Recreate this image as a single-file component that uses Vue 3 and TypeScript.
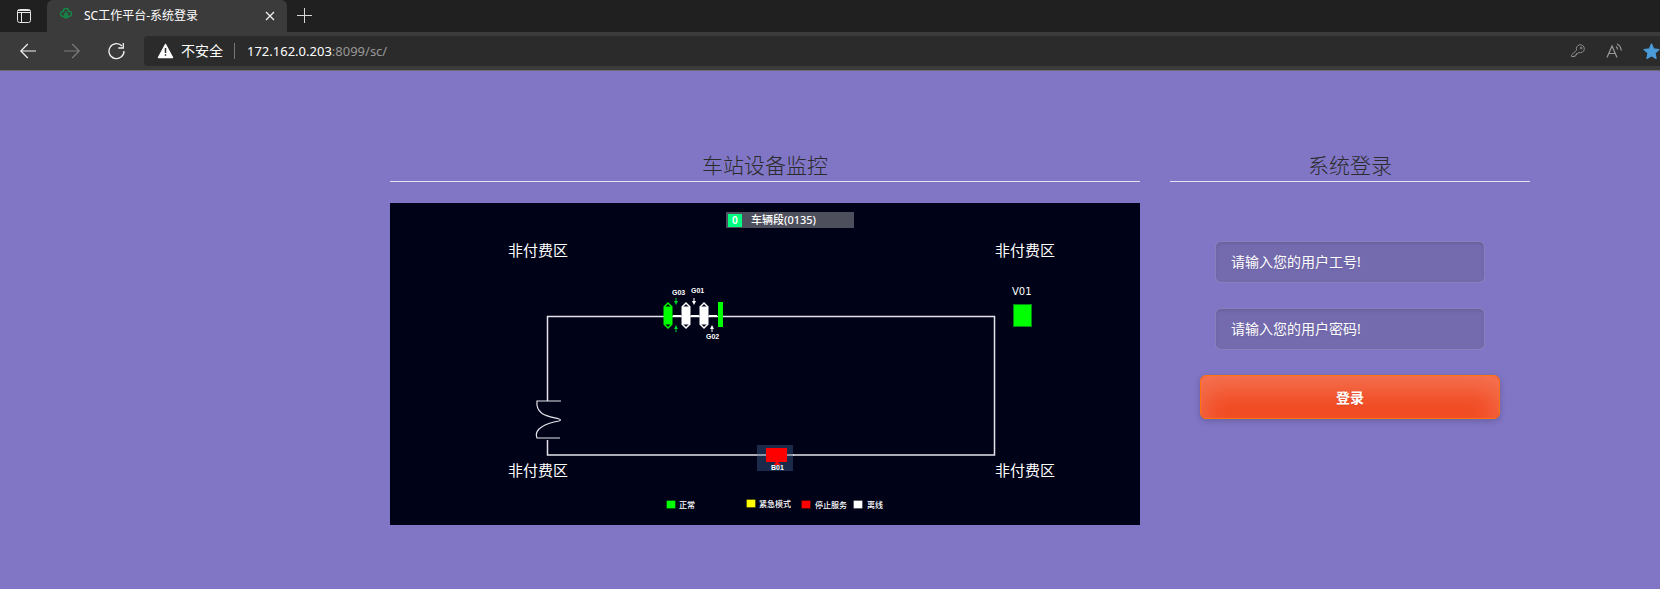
<script setup lang="ts">
import { ref } from 'vue'

interface Label { x: number; y: number; text: string }
interface Legend { x: number; y: number; color: string; text: string; tx: number }

const userId = ref('')
const password = ref('')

const zones: Label[] = [
  { x: 118, y: 53, text: '非付费区' },
  { x: 605, y: 53, text: '非付费区' },
  { x: 118, y: 273, text: '非付费区' },
  { x: 605, y: 273, text: '非付费区' },
]

const deviceLabels: Label[] = [
  { x: 282, y: 92, text: 'G03' },
  { x: 301, y: 90, text: 'G01' },
  { x: 316, y: 136, text: 'G02' },
  { x: 381, y: 267, text: 'B01' },
]

const gates = [
  { x: 274, color: '#00ff00' },
  { x: 292, color: '#ffffff' },
  { x: 310, color: '#ffffff' },
]

const arrows = [
  { x: 286, y: 95, up: false, color: '#00d030' },
  { x: 304, y: 95, up: false, color: '#ffffff' },
  { x: 286, y: 122, up: true, color: '#00d030' },
  { x: 322, y: 122, up: true, color: '#ffffff' },
]

const legends: Legend[] = [
  { x: 276, y: 297, color: '#00ff00', text: '正常', tx: 289 },
  { x: 356, y: 296, color: '#ffff00', text: '紧急模式', tx: 369 },
  { x: 411, y: 297, color: '#ff0000', text: '停止服务', tx: 425 },
  { x: 463, y: 297, color: '#ffffff', text: '离线', tx: 477 },
]
</script>

<template>
  <div class="window">
    <header class="tabs">
      <button class="icon-btn tab-menu" type="button" aria-label="标签操作">
        <svg width="16" height="16" viewBox="0 0 16 16" fill="none" stroke="#e8e8e8">
          <rect x="1.5" y="1.5" width="13" height="13" rx="2" />
          <path d="M2 2.5h12M2 4.5h12M5.5 5v9" />
        </svg>
      </button>
      <div class="tab">
        <svg class="favicon" width="14" height="14" viewBox="0 0 14 14" fill="none" stroke="#128a48" stroke-width="1.4">
          <path d="M5 5C3.500 3 5 1.500 7 1.500s3.500 1.500 2 3.500M4.500 4.500C2.500 4 1.500 5.500 1.500 7c0 2.500 3 3 4.500 1.500M9.500 4.500c2-.5 3 1 3 2.500 0 2.500-3 3-4.500 1.500M7 4.500v6M4.500 10.500h5M5 6.500L7 8l2-1.500" />
        </svg>
        <span class="tab-title">SC工作平台-系统登录</span>
        <button class="icon-btn" type="button" aria-label="关闭">
          <svg width="10" height="10" viewBox="0 0 10 10" stroke="#f0f0f0" stroke-width="1.3"><path d="M1 1l8 8M9 1L1 9" /></svg>
        </button>
      </div>
      <button class="icon-btn new-tab" type="button" aria-label="新建标签">
        <svg width="16" height="16" viewBox="0 0 16 16" stroke="#d8d8d8"><path d="M1 7.5h15M8.5 0v15" /></svg>
      </button>
    </header>

    <nav class="toolbar">
      <button class="icon-btn" type="button" aria-label="后退">
        <svg width="16" height="16" viewBox="0 0 16 16" fill="none" stroke="#f2f2f2" stroke-width="1.2"><path d="M16 8H.8M7.800 1L.8 8l7 7" /></svg>
      </button>
      <button class="icon-btn" type="button" aria-label="前进">
        <svg width="16" height="16" viewBox="0 0 16 16" fill="none" stroke="#7d7d7d" stroke-width="1.2"><path d="M0 8h15.200M8.200 1l7 7-7 7" /></svg>
      </button>
      <button class="icon-btn" type="button" aria-label="刷新">
        <svg width="17" height="18" viewBox="0 0 17 18" fill="none" stroke="#f2f2f2" stroke-width="1.3"><path d="M16 9A7.500 7.500 0 1 1 14 4M15.300 1v5h-5" /></svg>
      </button>
      <div class="address">
        <svg width="17" height="16" viewBox="0 0 17 16">
          <path d="M8.500 1.500L15.500 14.500H1.500z" fill="#fff" stroke="#fff" stroke-width="1.5" stroke-linejoin="round" />
          <path d="M8.500 5v5M8.500 11.200v1.600" stroke="#2b2b2b" stroke-width="1.5" />
        </svg>
        <span class="insecure">不安全</span>
        <span class="divider"></span>
        <span class="url"><b>172.162.0.203</b>:8099/sc/</span>
        <span class="actions">
          <button class="icon-btn" type="button" aria-label="密码">
            <svg width="16" height="16" viewBox="0 0 16 16" fill="none" stroke="#8c8c8c">
              <path d="M6.600 7.200A4 4 0 1 1 9 9.500L7.800 10.500H6.500V12H5v1.500H1.500V12z" stroke-linejoin="round" />
              <circle cx="11.2" cy="5" r=".9" />
            </svg>
          </button>
          <button class="icon-btn" type="button" aria-label="朗读">
            <svg width="17" height="16" viewBox="0 0 17 16" fill="none" stroke="#999" stroke-width="1.2">
              <path d="M1 14.500L6 3l5 11.500M2.800 10.500h6.500M10 3.500c1 .7 1.500 1.600 1.600 3M11 1c2.700 1.200 4 3.200 4.200 6.500" />
            </svg>
          </button>
          <button class="icon-btn" type="button" aria-label="收藏">
            <svg width="17" height="17" viewBox="0 0 17 17"><path d="M8.500 1l2.200 4.900 5.300.6-4 3.600 1.100 5.300-4.600-2.700-4.600 2.700L5 10.100 1 6.500l5.300-.6z" fill="#4b9bd9" stroke="#4b9bd9" stroke-width="1.2" stroke-linejoin="round" /></svg>
          </button>
        </span>
      </div>
    </nav>

    <main class="page">
      <section>
        <h2>车站设备监控</h2>
        <svg class="monitor" viewBox="0 0 750 322" role="img" aria-label="车站设备监控">
          <rect width="750" height="322" fill="#000218" />
          <rect x="336" y="9" width="128" height="16" fill="#4e4f5d" />
          <rect x="338" y="11" width="14" height="13" fill="#00ff80" />
          <text x="342" y="21" class="count">0</text>
          <text x="361" y="21" class="station">车辆段(0135)</text>
          <text v-for="(z, i) in zones" :key="'z' + i" :x="z.x" :y="z.y" class="zone">{{ z.text }}</text>

          <g fill="none" stroke="#e4e4ea" stroke-width="1.5">
            <path d="M157.500 198V113.500H604.500V252H157.500V237" />
            <path d="M171 198H147C145.500 212 158 213 169 216Q172 217 169 218C158 220 143 225 147 235H170" stroke-width="1.2" />
          </g>

          <g v-for="g in gates" :key="g.x" :fill="g.color" :stroke="g.color">
            <rect :x="g.x" y="104" width="8" height="17" />
            <path :d="`M${g.x} 104l4-4 4 4M${g.x} 121l4 4 4-4`" fill="none" stroke-width="1.5" />
            <path :d="`M${g.x + 9} 113h8`" stroke="#fff" stroke-width="2" />
          </g>
          <rect x="328" y="99" width="5" height="25" fill="#00ff00" />
          <path
            v-for="(a, i) in arrows" :key="'a' + i" :fill="a.color"
            :d="a.up ? `M${a.x} ${a.y}l2 4h-1.500v3h-1v-3h-1.500z` : `M${a.x} ${a.y + 7}l2-4h-1.500v-3h-1v3h-1.500z`"
          />

          <rect x="367" y="242" width="36" height="26" fill="#1b2a4a" />
          <path d="M367 252h37" stroke="#fff" />
          <path d="M376 245h21v14h-9l3 3h-7l2-3h-10z" fill="#ff0000" />
          <text v-for="d in deviceLabels" :key="d.text" :x="d.x" :y="d.y" class="device">{{ d.text }}</text>

          <text x="622" y="92" class="vending">V01</text>
          <rect x="623.5" y="101.5" width="18" height="22" fill="#00ff00" stroke="#008c10" />

          <g v-for="l in legends" :key="l.text">
            <rect :x="l.x + 0.5" :y="l.y + 0.5" width="9" height="8" :fill="l.color" stroke="#000" stroke-opacity=".3" />
            <text :x="l.tx" :y="l.y + 8" class="legend">{{ l.text }}</text>
          </g>
        </svg>
      </section>

      <section>
        <h2>系统登录</h2>
        <form class="login" @submit.prevent>
          <input v-model="userId" type="text" aria-label="用户工号" placeholder="请输入您的用户工号!" />
          <input v-model="password" type="password" aria-label="用户密码" placeholder="请输入您的用户密码!" />
          <button type="submit">登录</button>
        </form>
      </section>
    </main>
  </div>
</template>

<style>
body { background: #8176c6; }
</style>

<style scoped>
.window {
  background: #8176c6;
  font-family: "Noto Sans", "Noto Sans CJK SC", sans-serif;
  color: #fff;
}
.window * { box-sizing: border-box; }
.icon-btn {
  display: flex;
  align-items: center;
  justify-content: center;
  padding: 0;
  border: 0;
  background: none;
}
.tabs {
  display: flex;
  height: 32px;
  background: #202020;
}
.tab-menu { width: 47px; }
.tab {
  display: flex;
  align-items: center;
  width: 240px;
  padding: 0 12px;
  border-radius: 6px 6px 0 0;
  background: #3b3b3b;
}
.favicon { align-self: flex-start; margin-top: 7px; }
.tab-title {
  flex: 1;
  margin-left: 11px;
  font-size: 12px;
  line-height: 32px;
  white-space: nowrap;
}
.new-tab { width: 34px; }
.toolbar {
  display: flex;
  align-items: center;
  gap: 28px;
  height: 39px;
  padding-left: 20px;
  border-bottom: 1px solid #6c6b70;
  background: #3b3b3b;
}
.address {
  display: flex;
  flex: 1;
  align-items: center;
  height: 30px;
  margin-left: -9px;
  padding-left: 13px;
  border-radius: 4px 0 0 4px;
  background: #2b2b2b;
}
.insecure { margin-left: 7px; font-size: 14px; line-height: 20px; }
.divider { width: 1px; height: 16px; margin: 0 12px 0 11px; background: #777; }
.url { font-size: 13px; line-height: 20px; color: #989898; }
.url b { font-weight: 400; color: #fff; }
.actions { display: flex; gap: 20px; margin-left: auto; }

.page {
  display: grid;
  grid-template-columns: 25fr 12fr;
  gap: 30px;
  padding: 80px 130px 40px 390px;
}
h2 {
  margin: 0;
  padding-bottom: 1px;
  border-bottom: 1px solid #e4e2f3;
  font-size: 21px;
  font-weight: 300;
  line-height: 29px;
  text-align: center;
  color: #2b2b2b;
}
.monitor { display: block; width: 100%; margin-top: 21px; }
.monitor text { fill: #fff; }
.zone { font-size: 15px; }
.station { font-size: 11px; font-weight: 500; }
.count { font-size: 10px; font-weight: 600; }
.device { font: 700 7px "Liberation Sans", sans-serif; }
.vending { font: 10px "DejaVu Sans", sans-serif; }
.legend { font-size: 8px; font-weight: 500; }

.login {
  display: flex;
  flex-direction: column;
  align-items: center;
  gap: 25px;
  max-width: 300px;
  margin: 59px auto 0;
}
.login input {
  width: 90%;
  height: 42px;
  padding: 0 15px 2px;
  border: 1px solid rgba(255, 255, 255, .15);
  border-radius: 6px;
  outline: 0;
  background: rgba(45, 45, 45, .15);
  box-shadow: inset 0 2px 3px rgba(0, 0, 0, .1);
  font: 14px "Noto Sans", "Noto Sans CJK SC", sans-serif;
  color: #fff;
  text-shadow: 0 1px 2px rgba(0, 0, 0, .1);
}
.login input::placeholder { color: #fff; opacity: 1; }
.login button {
  width: 100%;
  height: 44px;
  padding: 0 0 1px;
  border: 1px solid #ff730e;
  border-radius: 6px;
  background: #f1461c;
  box-shadow: inset 0 15px 30px rgba(255, 255, 255, .25), 0 2px 7px rgba(0, 0, 0, .2);
  font: 700 14px "Noto Sans", "Noto Sans CJK SC", sans-serif;
  color: #fff;
  text-shadow: 0 1px 2px rgba(0, 0, 0, .1);
}
</style>
